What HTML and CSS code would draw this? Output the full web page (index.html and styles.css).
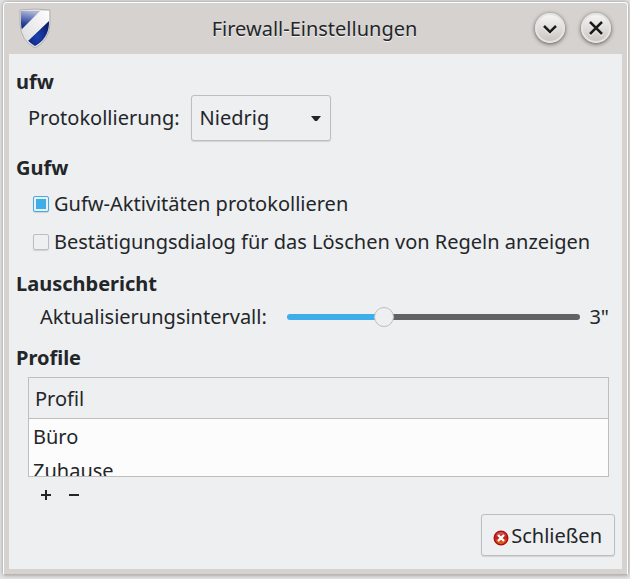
FILE: index.html
```html
<!DOCTYPE html>
<html lang="de">
<head>
<meta charset="utf-8">
<meta name="viewport" content="width=device-width, initial-scale=1">
<title>Firewall-Einstellungen</title>
<link rel="stylesheet" href="styles.css">
</head>
<body>
<main class="window">
  <header class="titlebar">
    <svg class="shield" viewBox="0 0 34 42" aria-hidden="true">
      <defs>
        <linearGradient id="sky" x1=".3" y1="0" x2=".1" y2="1"><stop offset="0" stop-color="#a9b4d6"/><stop offset=".7" stop-color="#2a409a"/><stop offset="1" stop-color="#10267c"/></linearGradient>
        <radialGradient id="navy" cx=".45" cy=".6" r=".6"><stop offset="0" stop-color="#1d42b4"/><stop offset="1" stop-color="#0c206e"/></radialGradient>
        <linearGradient id="band" x1="0" y1="1" x2="1" y2="0"><stop offset="0" stop-color="#d9d9d9"/><stop offset="1" stop-color="#ffffff"/></linearGradient>
        <clipPath id="crest"><path d="M3 4H31V17Q30 32 17 39Q4 32 3 17Z"/></clipPath>
      </defs>
      <path d="M2 3Q17 1 32 3V17Q31 34 17 41Q3 34 2 17Z" fill="#e1e1e3" stroke="#b4b0ae"/>
      <g clip-path="url(#crest)">
        <path d="M2 2H32V40H2Z" fill="url(#band)"/>
        <path d="M3 4H22L4 22H3Z" fill="url(#sky)"/>
        <path d="M31 14V40H17L10 34Z" fill="url(#navy)"/>
      </g>
    </svg>
    <h1 class="title">Firewall-Einstellungen</h1>
    <div class="controls">
      <button class="round" type="button" aria-label="Minimieren"><svg class="glyph" viewBox="0 0 20 20"><path class="light" d="M4 9l6 6 6-6"/><path class="dark" d="M4 8l6 6 6-6"/></svg></button>
      <button class="round" type="button" aria-label="Fenster schließen"><svg class="glyph" viewBox="0 0 20 20"><path class="light" d="M4 5l12 12M16 5L4 17"/><path class="dark" d="M4 4l12 12M16 4L4 16"/></svg></button>
    </div>
  </header>
  <form class="content">
    <section class="group">
      <h2 class="heading">ufw</h2>
      <div class="row logging">
        <label for="level">Protokollierung:</label>
        <div class="dropdown">
          <select id="level" class="select"><option>Niedrig</option></select>
          <svg class="arrow" viewBox="0 0 10 5" aria-hidden="true"><path d="M0 0H10L6 5H4Z"/></svg>
        </div>
      </div>
    </section>
    <section class="group">
      <h2 class="heading">Gufw</h2>
      <div class="checks">
        <label class="check"><input class="box" type="checkbox" checked>Gufw-Aktivitäten protokollieren</label>
        <label class="check"><input class="box" type="checkbox">Bestätigungsdialog für das Löschen von Regeln anzeigen</label>
      </div>
    </section>
    <section class="group">
      <h2 class="heading">Lauschbericht</h2>
      <div class="row interval">
        <label for="interval">Aktualisierungsintervall:</label>
        <input id="interval" class="slider" type="range" min="0" max="10" step="0.1" value="3.2">
        <output for="interval">3"</output>
      </div>
    </section>
    <section class="group">
      <h2 class="heading">Profile</h2>
      <div class="profiles">
        <div class="list">
          <table class="table">
            <thead><tr><th scope="col">Profil</th></tr></thead>
            <tbody><tr><td>Büro</td></tr><tr><td>Zuhause</td></tr></tbody>
          </table>
        </div>
        <div class="tools">
          <button class="tool" type="button" aria-label="Profil hinzufügen"><svg viewBox="0 0 10 10"><path d="M4 0H6V4H10V6H6V10H4V6H0V4H4Z"/></svg></button>
          <button class="tool" type="button" aria-label="Profil entfernen"><svg viewBox="0 0 10 10"><path d="M0 4H10V6H0Z"/></svg></button>
        </div>
      </div>
    </section>
    <footer class="footer">
      <button class="close" type="button">
        <svg class="stop" viewBox="0 0 16 16" aria-hidden="true">
          <defs><linearGradient id="red" x1="0" y1="0" x2="0" y2="1"><stop offset="0" stop-color="#d5686b"/><stop offset=".45" stop-color="#bd2016"/><stop offset="1" stop-color="#e87a18"/></linearGradient></defs>
          <circle cx="8" cy="8" r="6.8" fill="url(#red)" stroke="#b00c10" stroke-width="1.4"/>
          <path d="M5 5l6 6M11 5l-6 6" stroke="#fff" stroke-width="2.4"/>
        </svg>Schließen</button>
    </footer>
  </form>
</main>
</body>
</html>
```
FILE: styles.css
```css
* { box-sizing: border-box; }

body {
  margin: 0;
  padding: 2px 2px 4px 3px;
  background: #e4e4e4;
  color: #232629;
  font: 20px/28px "Noto Sans", "Liberation Sans", sans-serif;
}

button, select, input { font: inherit; color: inherit; margin: 0; }
h1, h2 { margin: 0; }

.window {
  padding: 0 5px 5px;
  background: #d6d2cf;
  border: 1px solid #fff;
  border-bottom-color: #b9b5b2;
  border-radius: 4px 4px 0 0;
  box-shadow: 0 0 4px #8c8c8c;
}

.titlebar {
  display: grid;
  grid-template-columns: 1fr auto 1fr;
  align-items: center;
  height: 51px;
  padding: 0 11px 0 9px;
}
.shield { width: 34px; height: 42px; margin-bottom: 2px; }
.title { font-size: 20px; font-weight: 400; text-shadow: 0 1px #f5f3f2; }
.controls { display: flex; justify-content: flex-end; gap: 16px; padding-bottom: 2px; }
.round {
  display: grid;
  place-items: center;
  width: 30px;
  height: 30px;
  padding: 0;
  border: 2px solid #e6e4e2;
  border-radius: 50%;
  background: linear-gradient(#f6f5f4, #cac6c2);
  box-shadow: 0 1px 4px #55514d;
}
.glyph { width: 20px; height: 20px; fill: none; stroke-width: 2.5; }
.light { stroke: #fff; }
.dark { stroke: #1c1c1c; }

.content {
  display: flex;
  flex-direction: column;
  padding: 14px 7px 13px;
  background: #eeeff1;
}
.heading { font-size: 20px; font-weight: 700; }
.row { display: flex; align-items: center; }

.logging { gap: 11px; padding-left: 12px; margin: -1px 0 13px; }
.dropdown { position: relative; width: 140px; }
.select {
  appearance: none;
  width: 100%;
  height: 46px;
  padding: 0 8px;
  border: 1px solid #bcbebf;
  border-radius: 3px;
  background: #eeeff1;
  box-shadow: 0 1px 1px #d2d3d4;
}
.arrow {
  position: absolute;
  top: 21px;
  right: 10px;
  width: 10px;
  height: 5px;
  fill: #232629;
  pointer-events: none;
}

.checks { display: grid; gap: 10px; padding: 8px 0 14px 17px; }
.check { display: flex; align-items: center; gap: 5px; white-space: nowrap; }
.box {
  appearance: none;
  width: 16px;
  height: 16px;
  border: 1px solid #bcbebf;
  border-radius: 2px;
  box-shadow: 0 1px 1px #cfd0d1;
}
.box:checked {
  padding: 2px;
  border-color: #3daee9;
  background: #3daee9 content-box;
}

.interval { padding: 5px 6px 0 24px; margin-bottom: 13px; }
.slider {
  appearance: none;
  flex: 1;
  min-width: 0;
  height: 20px;
  margin: 0 9px 0 20px;
  background: none;
}
.slider::-webkit-slider-runnable-track {
  height: 6px;
  border-radius: 3px;
  background: linear-gradient(to right, #3daee9 33%, #606263 33%);
}
.slider::-webkit-slider-thumb {
  appearance: none;
  width: 20px;
  height: 20px;
  margin-top: -7px;
  border: 1px solid #bcbebf;
  border-radius: 50%;
  background: #eeeff1;
}

.profiles { padding: 5px 6px 0 12px; }
.list { height: 100px; overflow: hidden; border: 1px solid #bcbebf; background: #fcfcfc; }
.table { width: 100%; border-collapse: collapse; }
.table th {
  height: 40px;
  padding: 2px 6px 0;
  border-bottom: 1px solid #bcbebf;
  background: #eeeff1;
  font-weight: 400;
  text-align: left;
}
.table td { height: 34px; padding: 3px 4px 0; }
.tools { display: flex; gap: 8px; padding: 8px 0 0 8px; }
.tool { display: grid; place-items: center; width: 20px; height: 20px; padding: 0; border: 0; background: none; }
.tool svg { width: 10px; height: 10px; fill: #232629; }

.footer { display: flex; justify-content: flex-end; padding-top: 9px; }
.close {
  display: flex;
  align-items: center;
  gap: 2px;
  height: 42px;
  padding: 1px 12px 0 11px;
  border: 1px solid #bcbebf;
  border-radius: 3px;
  background: #eeeff1;
  box-shadow: 0 1px 1px #d2d3d4;
}
.stop { width: 16px; height: 16px; margin-top: 4px; }
```
